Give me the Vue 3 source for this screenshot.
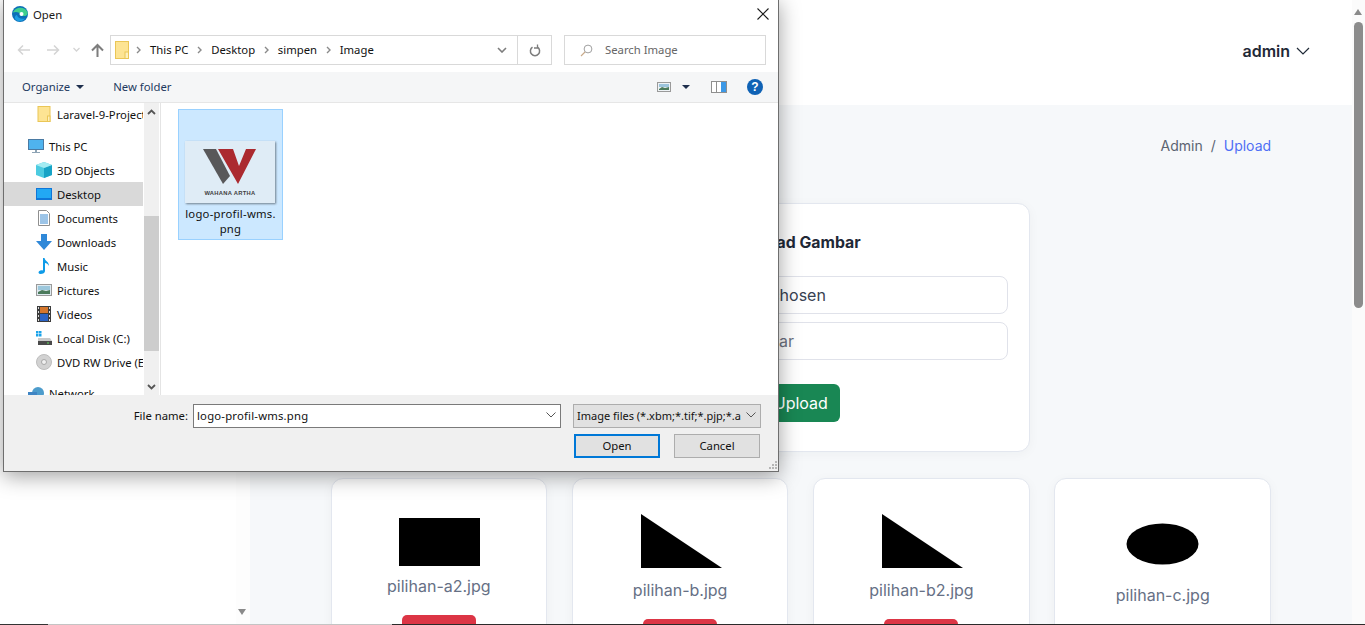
<script setup>
const gallery = [
  { name: 'pilihan-a2.jpg', height: 59, shape: 'rect' },
  { name: 'pilihan-b.jpg', height: 63, shape: 'tri' },
  { name: 'pilihan-b2.jpg', height: 63, shape: 'tri' },
  { name: 'pilihan-c.jpg', height: 68, shape: 'oval' },
];

const navItems = [
  { label: 'This PC', icon: 'pc', cls: 'top' },
  { label: '3D Objects', icon: 'cube' },
  { label: 'Desktop', icon: 'desk', active: true },
  { label: 'Documents', icon: 'doc' },
  { label: 'Downloads', icon: 'down' },
  { label: 'Music', icon: 'music' },
  { label: 'Pictures', icon: 'pic' },
  { label: 'Videos', icon: 'video' },
  { label: 'Local Disk (C:)', icon: 'disk' },
  { label: 'DVD RW Drive (E:)', icon: 'dvd' },
];

const crumbs = ['This PC', 'Desktop', 'simpen', 'Image'];
</script>

<template>
  <div class="page">
    <aside class="sidebar">
      <span class="side-arrow"></span>
    </aside>

    <div class="main">
      <header class="topbar">
        <span class="user">admin</span>
        <svg class="user-chevron" width="14" height="8" viewBox="0 0 14 8">
          <path d="M1 1l6 6 6-6" fill="none" stroke="#1f2937" stroke-width="1.2" />
        </svg>
      </header>

      <div class="content">
        <nav class="breadcrumb">
          <span>Admin</span>
          <span class="sep">/</span>
          <a>Upload</a>
        </nav>

        <div class="grid">
          <section class="upload-card">
            <h2>Upload Gambar</h2>
            <div class="field file">
              <span class="file-btn">Choose File</span>
              <span>No file chosen</span>
            </div>
            <div class="field hint">Masukkan Nama Gambar</div>
            <button class="send">Upload</button>
          </section>

          <article v-for="item in gallery" :key="item.name" class="tile">
            <svg width="120" :height="item.height" viewBox="0 0 120 68" preserveAspectRatio="xMidYMin slice">
              <rect v-if="item.shape === 'rect'" x="20" y="10" width="81" height="48" />
              <polygon v-else-if="item.shape === 'tri'" points="21,6 21,60 102,60" />
              <ellipse v-else cx="59.500" cy="36" rx="36" ry="20.500" />
            </svg>
            <p>{{ item.name }}</p>
            <button class="remove" aria-label="Hapus"></button>
          </article>
        </div>
      </div>
    </div>

    <div class="scrollbar">
      <span class="scroll-up"></span>
      <span class="scroll-thumb"></span>
    </div>

    <div class="taskline">
      <span class="seg-dark"></span>
      <span class="seg-light"></span>
      <span class="seg-rest"></span>
    </div>

    <!-- native file dialog floating over the page -->
    <div class="dialog">
      <div class="titlebar">
        <svg class="edge" width="16" height="16" viewBox="0 0 16 16">
          <circle cx="8" cy="8" r="8" fill="#0c6fb8" />
          <path d="M1 6.500C2.500 1.500 12-1 15.500 6c.8 2.500-1 4-3.500 4-1.500 0-3-.3-3.800-1 1-2-3.500-4-7.200-2.500z" fill="#3fcf8e" />
          <path d="M5 9c.5 3 4 4.500 8 3.500-2 3-7 4-9.500 1C2 11.500 3 9.500 5 9z" fill="#1b9de2" />
          <circle cx="9.500" cy="8" r="2" fill="#fff" />
        </svg>
        <span class="title">Open</span>
        <svg class="close" width="12" height="12" viewBox="0 0 12 12">
          <path d="M.5.500l11 11M11.500.500l-11 11" stroke="#1a1a1a" stroke-width="1.100" />
        </svg>
      </div>

      <div class="address-row">
        <div class="history">
          <svg width="13" height="12" viewBox="0 0 13 12"><path d="M13 6H1.500M6 1.500L1.500 6 6 10.500" fill="none" stroke="#d4d4d4" stroke-width="1.500" /></svg>
          <svg class="fwd" width="13" height="12" viewBox="0 0 13 12"><path d="M0 6h11.500M7 1.500L11.500 6 7 10.500" fill="none" stroke="#d4d4d4" stroke-width="1.500" /></svg>
          <svg class="recent" width="7" height="6" viewBox="0 0 7 6"><path d="M.5 1l3 3 3-3" fill="none" stroke="#d4d4d4" stroke-width="1.300" /></svg>
          <svg class="up" width="13" height="14" viewBox="0 0 13 14"><path d="M6.500 14V2M1 7.500L6.500 2 12 7.500" fill="none" stroke="#7d7d7d" stroke-width="2" /></svg>
        </div>
        <div class="address">
          <svg class="folder-big" width="14" height="18" viewBox="0 0 14 18">
            <rect x=".5" y=".5" width="13" height="17" fill="#fde493" stroke="#eac656" />
            <rect x="10" y="11" width="3.500" height="6.500" fill="#fdf0bd" stroke="#eac656" />
          </svg>
          <template v-for="crumb in crumbs" :key="crumb">
            <svg class="crumb-arrow" width="5" height="8" viewBox="0 0 5 8"><path d="M1 1l3 3-3 3" fill="none" stroke="#8a8a8a" stroke-width="1.400" /></svg>
            <span class="crumb">{{ crumb }}</span>
          </template>
          <svg class="addr-chevron" width="10" height="6" viewBox="0 0 10 6"><path d="M1 1l4 4 4-4" fill="none" stroke="#7d7d7d" stroke-width="1.600" /></svg>
          <div class="refresh">
            <svg width="12" height="13" viewBox="0 0 12 13">
              <path d="M3.500 3.200a4.600 4.600 0 1 0 5 0" fill="none" stroke="#7d7d7d" stroke-width="1.500" />
              <path d="M8.500 .5v3.500h-3.500" fill="none" stroke="#7d7d7d" stroke-width="1.300" />
            </svg>
          </div>
        </div>
        <div class="search">
          <svg width="13" height="13" viewBox="0 0 13 13">
            <circle cx="8" cy="5" r="3.900" fill="none" stroke="#a0a0a0" />
            <path d="M5 8l-4 4" stroke="#c9a989" stroke-width="1.100" />
          </svg>
          <span>Search Image</span>
        </div>
      </div>

      <div class="toolbar">
        <span class="organize">Organize</span>
        <span class="caret"></span>
        <span class="new-folder">New folder</span>
        <svg class="view-icon" width="14" height="10" viewBox="0 0 14 10">
          <rect x=".5" y=".5" width="13" height="9" fill="#eef3f6" stroke="#9a9a9a" />
          <rect x="2" y="2" width="10" height="3" fill="#9cc4dc" />
          <path d="M2 7l3-2 3 1 4-1v3H2z" fill="#4b7a5b" />
        </svg>
        <span class="caret view-caret"></span>
        <svg class="pane-icon" width="16" height="12" viewBox="0 0 16 12">
          <rect x=".5" y=".5" width="15" height="11" fill="#fff" stroke="#8f8f8f" />
          <rect x="10" y="1" width="5" height="10" fill="#3c98e6" />
          <rect x="5" y="1" width="1" height="10" fill="#8f8f8f" />
        </svg>
        <span class="help">?</span>
      </div>

      <div class="body">
        <div class="nav-pane">
          <div class="nav-row pinned">
            <svg class="nav-icon" width="13" height="16" viewBox="0 0 13 16">
              <rect x=".5" y=".5" width="12" height="15" fill="#fde493" stroke="#eac656" />
              <rect x="10" y="10" width="2.500" height="5.500" fill="#fdf0bd" stroke="#eac656" />
            </svg>
            <span>Laravel-9-Project</span>
          </div>

          <div v-for="row in navItems" :key="row.label" class="nav-row" :class="[row.cls, { active: row.active }]">
            <svg v-if="row.icon === 'pc'" class="pc-icon" width="16" height="15" viewBox="0 0 16 15">
              <rect x=".5" y=".5" width="15" height="10" fill="#4fb3ee" stroke="#4a7aa3" />
              <path d="M7 11h2v2H7zM4 13h8v1H4z" fill="#8ea4b5" />
            </svg>
            <svg v-else-if="row.icon === 'cube'" class="nav-icon" width="16" height="16" viewBox="0 0 16 16">
              <path d="M8 0l8 3v10l-8 3-8-3V3z" fill="#4ccbe0" />
              <path d="M8 6l8-3v10l-8 3z" fill="#17a3c6" />
              <path d="M8 0l8 3-8 3-8-3z" fill="#a4ecf2" />
            </svg>
            <svg v-else-if="row.icon === 'desk'" class="nav-icon" width="16" height="12" viewBox="0 0 16 12">
              <rect width="16" height="12" fill="#0f76d8" />
              <rect x="1" y="1" width="14" height="9" fill="#22a8f4" />
            </svg>
            <svg v-else-if="row.icon === 'doc'" class="nav-icon" width="12" height="16" viewBox="0 0 12 16">
              <path d="M.5.500h8l3 3v12H.5z" fill="#fff" stroke="#8f8f8f" />
              <path d="M2 5h8M2 7h8M2 9h8M2 11h8M2 13h8" stroke="#3b8ad0" />
            </svg>
            <svg v-else-if="row.icon === 'down'" class="nav-icon" width="16" height="16" viewBox="0 0 16 16">
              <path d="M5 0h6v7h5l-8 9-8-9h5z" fill="#2f88d8" />
            </svg>
            <svg v-else-if="row.icon === 'music'" class="nav-icon" width="12" height="16" viewBox="0 0 12 16">
              <path d="M5 0h1.500c.5 3 4.500 3.500 4.500 8-1-2-2.500-3-4-3v8c0 2-2 3-4.500 3C.5 16 0 14.500 1 13.300 2 12.300 3.800 12 5 12.500z" fill="#0e9be8" />
            </svg>
            <svg v-else-if="row.icon === 'pic'" class="nav-icon" width="16" height="12" viewBox="0 0 16 12">
              <rect x=".5" y=".5" width="15" height="11" fill="#dfeaf0" stroke="#9a9a9a" />
              <rect x="2" y="2" width="12" height="4" fill="#9cc7dc" />
              <path d="M2 8l4-2 4 1 4-1v4H2z" fill="#4b7a5b" />
            </svg>
            <svg v-else-if="row.icon === 'video'" class="nav-icon" width="14" height="16" viewBox="0 0 14 16">
              <rect width="14" height="16" fill="#3c3c3c" />
              <rect x="3" y="1" width="8" height="6" fill="#d4762c" />
              <rect x="3" y="8" width="8" height="7" fill="#2a63c4" />
              <path d="M1 1h1v2H1zM1 5h1v2H1zM1 9h1v2H1zM1 13h1v2H1zM12 1h1v2h-1zM12 5h1v2h-1zM12 9h1v2h-1zM12 13h1v2h-1z" fill="#ddd" />
            </svg>
            <svg v-else-if="row.icon === 'disk'" class="nav-icon" width="16" height="14" viewBox="0 0 16 14">
              <path d="M0 0h2.500v2.500H0zM3 0h2.500v2.500H3zM0 3h2.500v2.500H0zM3 3h2.500v2.500H3z" fill="#1aa3ea" />
              <path d="M2 7h12l2 3v4H2z" fill="#c9c9c9" />
              <rect x="2" y="10" width="14" height="4" fill="#4a4a4a" />
              <rect x="11" y="11.500" width="2" height="1" fill="#5fe05f" />
            </svg>
            <svg v-else class="nav-icon" width="16" height="16" viewBox="0 0 16 16">
              <circle cx="8" cy="8" r="7.500" fill="#d2d2d2" stroke="#bdbdbd" />
              <circle cx="8" cy="8" r="2.500" fill="#f0f0f0" stroke="#a8a8a8" />
            </svg>
            <span>{{ row.label }}</span>
          </div>

          <div class="nav-row network">
            <svg class="pc-icon" width="16" height="15" viewBox="0 0 16 15">
              <circle cx="10" cy="7" r="6" fill="#4d9ccc" />
              <rect x="0" y="6" width="9" height="7" fill="#3f85c4" />
            </svg>
            <span>Network</span>
          </div>
        </div>

        <div class="nav-scroll">
          <svg class="nav-arrow" width="9" height="6" viewBox="0 0 9 6"><path d="M1 5l3.500-3.500L8 5" fill="none" stroke="#555" stroke-width="1.800" /></svg>
          <span class="nav-thumb"></span>
          <svg class="nav-arrow lower" width="9" height="6" viewBox="0 0 9 6"><path d="M1 1l3.500 3.500L8 1" fill="none" stroke="#555" stroke-width="1.800" /></svg>
        </div>

        <div class="files">
          <div class="file-tile">
            <div class="thumb">
              <svg width="90" height="62" viewBox="0 0 90 62">
                <polygon points="18,8 31,8 45,35 38,43" fill="#58585a" />
                <polygon points="33,8 48,8 54,25 61,8 71,8 53,43" fill="#ab2a30" />
                <text x="45" y="54" text-anchor="middle" class="logo-text">WAHANA ARTHA</text>
              </svg>
            </div>
            <span class="file-name">logo-profil-wms.<br />png</span>
          </div>
        </div>
      </div>

      <div class="footer">
        <div class="name-row">
          <label>File name:</label>
          <div class="name-input">
            <span>logo-profil-wms.png</span>
            <svg width="10" height="6" viewBox="0 0 10 6"><path d="M.5.500L5 5 9.500.500" fill="none" stroke="#555" stroke-width="1" /></svg>
          </div>
          <div class="type-select">
            <span>Image files (*.xbm;*.tif;*.pjp;*.a</span>
            <svg width="10" height="6" viewBox="0 0 10 6"><path d="M.5.500L5 5 9.500.500" fill="none" stroke="#555" stroke-width="1" /></svg>
          </div>
        </div>
        <div class="actions">
          <button class="win-btn primary">Open</button>
          <button class="win-btn">Cancel</button>
        </div>
        <svg class="grip" width="10" height="10" viewBox="0 0 10 10">
          <path d="M7 0h2v2H7zM4 3h2v2H4zM7 3h2v2H7zM1 6h2v2H1zM4 6h2v2H4zM7 6h2v2H7z" fill="#b5b5b5" />
        </svg>
      </div>
    </div>
  </div>
</template>

<style scoped>
.page {
  position: relative;
  display: flex;
  width: 1365px;
  height: 625px;
  overflow: hidden;
  background: #fff;
  font-family: Inter, "Liberation Sans", sans-serif;
}

.sidebar {
  position: relative;
  box-sizing: border-box;
  flex: 0 0 250px;
  background: #fff;
  border-right: 14px solid #fdfdfd;
}

.side-arrow {
  position: absolute;
  left: 238px;
  top: 609px;
  border-left: 4px solid transparent;
  border-right: 4px solid transparent;
  border-top: 6px solid #8a8a8a;
}

.main {
  flex: 1;
  padding-right: 13px;
  background: #f6f8fa;
  background-clip: content-box;
}

.topbar {
  display: flex;
  align-items: center;
  justify-content: flex-end;
  gap: 6px;
  height: 101px;
  padding-right: 42px;
  padding-bottom: 4px;
  background: #fff;
}

.user {
  color: #1f2937;
  font-size: 16px;
  font-weight: 600;
}

.content {
  padding: 0 81px 0 80.500px;
}

.breadcrumb {
  display: flex;
  justify-content: flex-end;
  gap: 8px;
  height: 98px;
  padding-top: 32px;
  box-sizing: border-box;
  color: #5b6472;
  font-size: 14px;
  line-height: 18px;
}

.breadcrumb a {
  color: #4f6ff5;
}

.grid {
  display: grid;
  grid-template-columns: repeat(4, 216.670px);
  column-gap: 24.670px;
  row-gap: 26px;
}

.upload-card {
  grid-column: 2 / 4;
  box-sizing: border-box;
  height: 249px;
  padding: 27px 21px 0;
  text-align: center;
  background: #fff;
  border: 1px solid #e3e7ef;
  border-radius: 12px;
  box-shadow: 0 2px 12px rgba(30, 41, 59, 0.04);
}

.upload-card h2 {
  margin: 0 0 21px;
  color: #1f2937;
  font-size: 15.800px;
  font-weight: 700;
  line-height: 24px;
}

.field {
  display: flex;
  align-items: center;
  box-sizing: border-box;
  height: 38px;
  margin-bottom: 8px;
  padding: 0 13px;
  color: #374151;
  font-size: 16px;
  text-align: left;
  background: #fff;
  border: 1px solid #e0e2ea;
  border-radius: 8px;
}

.field.hint {
  padding-left: 9px;
  color: #6b7280;
}

.file-btn {
  margin-right: 31px;
  font-size: 14px;
}

.send {
  margin-top: 16px;
  height: 38px;
  padding: 0 12.500px;
  color: #fff;
  font: 400 16px Inter, sans-serif;
  background: #198754;
  border: 0;
  border-radius: 6px;
}

.tile {
  box-sizing: border-box;
  height: 200px;
  padding-top: 29px;
  text-align: center;
  background: #fff;
  border: 1px solid #e3e7ef;
  border-radius: 12px;
  box-shadow: 0 2px 12px rgba(30, 41, 59, 0.04);
}

.tile:first-of-type {
  grid-column-start: 1;
}

.tile svg {
  display: block;
  margin: 0 auto;
}

.tile p {
  margin: 7px 0 17px;
  color: #667085;
  font-size: 16px;
  line-height: 24px;
}

.remove {
  width: 74px;
  height: 36px;
  background: #dc3545;
  border: 0;
  border-radius: 5px;
}

.scrollbar {
  position: absolute;
  top: 0;
  right: 0;
  bottom: 0;
  width: 13px;
  background: #fbfbfb;
}

.scroll-up {
  position: absolute;
  top: 9px;
  left: 2px;
  border-left: 4.500px solid transparent;
  border-right: 4.500px solid transparent;
  border-bottom: 6px solid #8a8a8a;
}

.scroll-thumb {
  position: absolute;
  top: 22px;
  left: 2px;
  width: 9px;
  height: 286px;
  background: #8c8c8c;
  border-radius: 5px;
}

.taskline {
  position: absolute;
  left: 0;
  right: 0;
  bottom: 0;
  display: flex;
  height: 1px;
}

.seg-dark {
  width: 48px;
  background: #333;
}

.seg-light {
  width: 344px;
  background: #c4c4c4;
}

.seg-rest {
  flex: 1;
  background: #2b2b2b;
}

/* dialog */
.dialog {
  position: absolute;
  top: -1px;
  left: 3px;
  box-sizing: border-box;
  display: flex;
  flex-direction: column;
  width: 776px;
  height: 473px;
  color: #111;
  font-family: "Noto Sans", "Open Sans", sans-serif;
  font-size: 11.300px;
  background: #fff;
  border: 1px solid #6e6e6e;
  box-shadow: 0 4px 20px rgba(0, 0, 0, 0.38);
}

.titlebar {
  display: flex;
  align-items: center;
  box-sizing: border-box;
  height: 30px;
  padding: 0 0 2px 8px;
}

.edge {
  margin-right: 5px;
}

.title {
  color: #1a1a1a;
}

.close {
  margin-left: auto;
  margin-right: 9px;
}

.address-row {
  display: flex;
  align-items: flex-start;
  height: 42px;
  padding-top: 5px;
  box-sizing: border-box;
}

.history {
  display: flex;
  align-items: center;
  width: 106px;
  height: 30px;
  padding-left: 13px;
  box-sizing: border-box;
}

.fwd {
  margin-left: 17px;
}

.recent {
  margin-left: 13px;
}

.up {
  margin-left: 11px;
}

.address {
  display: flex;
  align-items: center;
  width: 442px;
  height: 30px;
  box-sizing: border-box;
  padding-left: 4px;
  border: 1px solid #d9d9d9;
}

.folder-big {
  margin-right: 7px;
}

.crumb-arrow {
  margin-right: 9px;
}

.crumb {
  margin-right: 8.700px;
  padding-bottom: 2px;
}

.addr-chevron {
  margin-left: auto;
  margin-right: 10px;
}

.refresh {
  display: flex;
  align-items: center;
  justify-content: center;
  width: 33px;
  height: 100%;
  border-left: 1px solid #d9d9d9;
}

.search {
  display: flex;
  align-items: center;
  gap: 12px;
  width: 202px;
  height: 30px;
  margin-left: 12px;
  padding-left: 15px;
  box-sizing: border-box;
  color: #666;
  border: 1px solid #d9d9d9;
}

.search span {
  padding-bottom: 2px;
}

.toolbar {
  display: flex;
  align-items: center;
  height: 31px;
  color: #1e3a5f;
  background: #f5f6f7;
  border-bottom: 1px solid #e6e6e6;
  box-sizing: border-box;
}

.organize,
.new-folder {
  padding-bottom: 2px;
}

.organize {
  margin-left: 18px;
}

.caret {
  margin-left: 6px;
  border-left: 4px solid transparent;
  border-right: 4px solid transparent;
  border-top: 4px solid #1e2f4d;
}

.new-folder {
  margin-left: 29px;
}

.view-icon {
  margin-left: auto;
}

.view-caret {
  margin-left: 11px;
}

.pane-icon {
  margin-left: 21px;
}

.help {
  display: flex;
  align-items: center;
  justify-content: center;
  width: 16px;
  height: 16px;
  margin-left: 20px;
  margin-right: 15px;
  color: #fff;
  font: 700 12px "Liberation Sans", sans-serif;
  background: #0f62b5;
  border-radius: 50%;
}

.body {
  display: flex;
  flex: 1;
  min-height: 0;
}

.nav-pane {
  flex: 0 0 139px;
  overflow: hidden;
}

.nav-row {
  display: flex;
  align-items: center;
  height: 24px;
  white-space: nowrap;
  overflow: hidden;
}

.nav-row.pinned {
  margin-top: -1px;
}

.nav-row.top {
  margin-top: 8px;
}

.nav-row.network {
  margin-top: 7px;
}

.nav-row.active {
  background: #d9d9d9;
}

.nav-icon {
  flex: 0 0 auto;
  margin-left: 32px;
  margin-right: 5px;
  width: 16px;
}

.pc-icon {
  flex: 0 0 auto;
  margin-left: 24px;
  margin-right: 5px;
}

.nav-scroll {
  position: relative;
  flex: 0 0 15px;
  margin: 0 1px;
  background: #f0f0f0;
}

.nav-arrow {
  position: absolute;
  top: 6px;
  left: 3px;
}

.nav-arrow.lower {
  top: auto;
  bottom: 5px;
}

.nav-thumb {
  position: absolute;
  top: 113px;
  left: 0;
  width: 100%;
  height: 135px;
  background: #cdcdcd;
}

.files {
  flex: 1;
  padding: 6px 0 0 17px;
  border-left: 1px solid #e4e4e4;
}

.file-tile {
  display: flex;
  flex-direction: column;
  align-items: center;
  box-sizing: border-box;
  width: 105px;
  height: 131px;
  padding-top: 31px;
  background: #cce8ff;
  border: 1px solid #99d1ff;
}

.thumb {
  width: 90px;
  height: 62px;
  margin-right: 2px;
  background: #dfecf6;
  box-shadow: 1px 1px 2px rgba(0, 0, 0, 0.45);
}

.thumb svg {
  display: block;
}

.logo-text {
  fill: #3e3e3e;
  font: 700 5.800px "Liberation Sans", sans-serif;
  letter-spacing: 0.3px;
}

.file-name {
  margin-top: 3px;
  line-height: 15px;
  text-align: center;
  letter-spacing: 0.25px;
}

.footer {
  position: relative;
  flex: 0 0 76px;
  box-sizing: border-box;
  padding-top: 9px;
  background: #f0f0f0;
}

.name-row {
  display: flex;
  align-items: center;
}

.name-row label {
  width: 189px;
  padding: 0 5px 2px 0;
  box-sizing: border-box;
  text-align: right;
}

.name-input {
  display: flex;
  align-items: center;
  justify-content: space-between;
  box-sizing: border-box;
  width: 368px;
  height: 24px;
  padding: 0 4px 2px 3px;
  letter-spacing: 0.2px;
  background: #fff;
  border: 1px solid #7a7a7a;
}

.type-select {
  display: flex;
  align-items: center;
  justify-content: space-between;
  box-sizing: border-box;
  width: 188px;
  height: 24px;
  margin-left: 12px;
  padding: 0 4px 2px 3px;
  white-space: nowrap;
  background: #e1e1e1;
  border: 1px solid #adadad;
}

.type-select span {
  overflow: hidden;
  font-size: 11px;
}

.type-select svg {
  flex: 0 0 auto;
  margin-left: 5px;
}

.actions {
  display: flex;
  gap: 14px;
  margin: 6px 0 0 570px;
}

.win-btn {
  box-sizing: border-box;
  width: 86px;
  height: 24px;
  padding: 0 0 2px;
  color: #111;
  font: inherit;
  background: #e1e1e1;
  border: 1px solid #adadad;
}

.win-btn.primary {
  border: 2px solid #0078d7;
}

.grip {
  position: absolute;
  right: 0;
  bottom: 0;
}
</style>

<style>
html,
body {
  overflow: hidden;
}
</style>
